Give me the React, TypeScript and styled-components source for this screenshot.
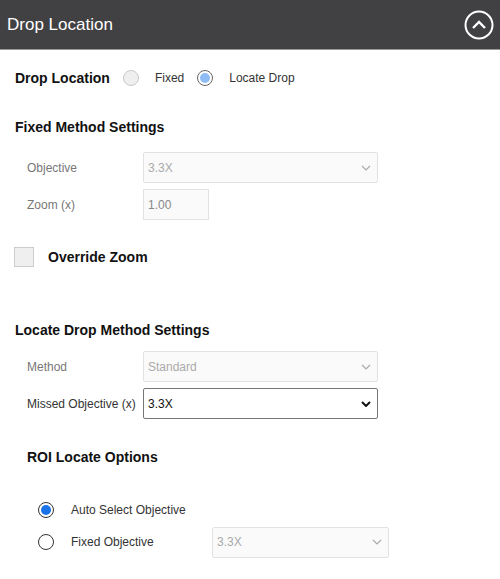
import React from "react";
import styled, { createGlobalStyle } from "styled-components";

const Global = createGlobalStyle`
  body { margin: 0; font-family: "Liberation Sans", Arial, sans-serif; background: #fff; }
`;
const Header = styled.div`
  height: 49px; background: #414143; display: flex; align-items: center;
  justify-content: space-between; padding: 0 6px 0 7px; color: #fff; font-size: 17px;
  border-bottom: 1px solid #999;
`;
const Body = styled.div`padding: 0 0 0 15px;`;
const Row = styled.div<{ $h: number; $pl?: number }>`
  box-sizing: border-box;
  height: ${p => p.$h}px; display: flex; align-items: center; padding-left: ${p => p.$pl ?? 0}px;
`;
const Bold = styled.span`font-weight: bold; font-size: 14px; color: #111;`;
const Small = styled.span<{ $c?: string; $w?: number; $ml?: number }>`
  font-size: 12px; color: ${p => p.$c ?? "#333"}; ${p => p.$w ? `width:${p.$w}px;` : ""}
  margin-left: ${p => p.$ml ?? 0}px;
`;
const Radio = styled.span<{ $on?: boolean; $dis?: boolean; $ml?: number }>`
  width: 16px; height: 16px; border-radius: 50%; box-sizing: border-box; margin-left: ${p => p.$ml ?? 0}px;
  border: 1px solid ${p => p.$dis ? (p.$on ? "#666" : "#c8c8c8") : "#333"};
  background: ${p => p.$dis && !p.$on ? "#efefef" : "#fff"};
  display: flex; align-items: center; justify-content: center;
  &::after { content: ""; width: 10px; height: 10px; border-radius: 50%;
    background: ${p => p.$on ? (p.$dis ? "#8fbcf5" : "#1a73e8") : "transparent"}; }
`;
const Select = styled.div<{ $w: number; $dis?: boolean }>`
  width: ${p => p.$w}px; height: 31px; box-sizing: border-box; display: flex; align-items: center;
  justify-content: space-between; padding: 0 6px 0 4px; font-size: 12px;
  border: 1px solid ${p => p.$dis ? "#e2e2e2" : "#767676"}; border-radius: 2px;
  background: ${p => p.$dis ? "#fafafa" : "#fff"}; color: ${p => p.$dis ? "#aaa" : "#111"};
`;
const Input = styled.div`
  width: 66px; height: 31px; box-sizing: border-box; border: 1px solid #e2e2e2;
  background: #fafafa; color: #888; font-size: 12px; display: flex; align-items: center; padding-left: 4px;
`;
const Check = styled.span`
  width: 20px; height: 20px; box-sizing: border-box; border: 1px solid #ccc; background: #efefef;
  margin-left: -1px; margin-right: 14px;
`;
const Chev = ({ dis }: { dis?: boolean }) => (
  <svg width="10" height="6" viewBox="0 0 10 6"><path d="M1 1l4 4 4-4" fill="none" stroke={dis ? "#aaa" : "#111"} strokeWidth={dis ? 1.2 : 2} /></svg>
);

export default function App() {
  return (
    <>
      <Global />
      <Header>
        <span>Drop Location</span>
        <svg width="30" height="30" viewBox="0 0 30 30"><circle cx="15" cy="15" r="13.5" fill="none" stroke="#fff" strokeWidth="2" /><path d="M9 18l6-6 6 6" fill="none" stroke="#fff" strokeWidth="2.4" /></svg>
      </Header>
      <Body>
        <Row $h={54} style={{ paddingTop: 2 }}>
          <Bold>Drop Location</Bold>
          <Radio $dis $ml={13} />
          <Small $ml={16}>Fixed</Small>
          <Radio $dis $on $ml={13} />
          <Small $ml={16}>Locate Drop</Small>
        </Row>
        <Row $h={45}><Bold>Fixed Method Settings</Bold></Row>
        <Row $h={37} $pl={12}><Small $c="#777" $w={116}>Objective</Small><Select $w={235} $dis>3.3X<Chev dis /></Select></Row>
        <Row $h={37} $pl={12}><Small $c="#777" $w={116}>Zoom (x)</Small><Input>1.00</Input></Row>
        <Row $h={64} style={{ paddingTop: 4 }}><Check /><Bold>Override Zoom</Bold></Row>
        <Row $h={61} style={{ paddingTop: 24 }}><Bold>Locate Drop Method Settings</Bold></Row>
        <Row $h={37} $pl={12}><Small $c="#777" $w={116}>Method</Small><Select $w={235} $dis>Standard<Chev dis /></Select></Row>
        <Row $h={37} $pl={12}><Small $w={116}>Missed Objective (x)</Small><Select $w={235}>3.3X<Chev /></Select></Row>
        <Row $h={60} $pl={12} style={{ paddingTop: 10 }}><Bold>ROI Locate Options</Bold></Row>
        <Row $h={40} $pl={23} style={{ paddingTop: 16 }}><Radio $on /><Small $ml={17}>Auto Select Objective</Small></Row>
        <Row $h={40} $pl={23}><Radio /><Small $ml={17} $w={141}>Fixed Objective</Small><Select $w={177} $dis>3.3X<Chev dis /></Select></Row>
      </Body>
    </>
  );
}
